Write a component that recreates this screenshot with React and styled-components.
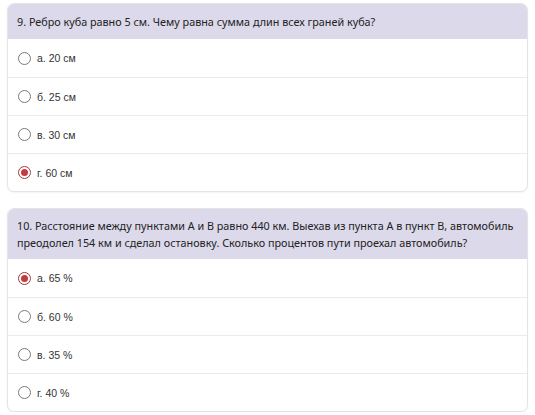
import React from 'react';
import styled, { createGlobalStyle } from 'styled-components';

const Global = createGlobalStyle`
  html, body { margin: 0; padding: 0; background: #fff; }
  body { font-family: "Noto Sans", sans-serif; }
`;

const Page = styled.div`
  padding: 3px 7px 0 7px;
  display: flex;
  flex-direction: column;
  gap: 16px;
`;

const Card = styled.div`
  border: 1px solid #e4e4e4;
  border-radius: 7px;
  overflow: hidden;
  background: #fff;
  box-shadow: 0 1px 2px rgba(0, 0, 0, 0.05);
`;

const Header = styled.div`
  background: #dcd9eb;
  padding: ${(p) => (p.multi ? '8px 9px 8px' : '9px 9px 9px')};
  font-size: 10.8px;
  line-height: 17px;
  color: #222;
`;

const Option = styled.label`
  display: flex;
  align-items: center;
  gap: 6px;
  height: 38px;
  box-sizing: border-box;
  padding: 0 10px;
  border-top: ${(p) => (p.first ? 'none' : '1px solid #ebebeb')};
  font-family: "Liberation Sans", Arial, sans-serif;
  font-size: 10.5px;
  color: #333;
`;

const Radio = styled.span`
  width: 13px;
  height: 13px;
  box-sizing: border-box;
  border-radius: 50%;
  border: 1px solid ${(p) => (p.checked ? '#9e3a3a' : '#7a7a7a')};
  display: flex;
  align-items: center;
  justify-content: center;
  background: #fff;
  &::after {
    content: "";
    display: ${(p) => (p.checked ? 'block' : 'none')};
    width: 7px;
    height: 7px;
    border-radius: 50%;
    background: #c43a3f;
  }
`;

const questions = [
  {
    text: '9. Ребро куба равно 5 см. Чему равна сумма длин всех граней куба?',
    options: ['а. 20 см', 'б. 25 см', 'в. 30 см', 'г. 60 см'],
    checked: 3,
  },
  {
    text: '10. Расстояние между пунктами А и В равно 440 км. Выехав из пункта А в пункт В, автомобиль преодолел 154 км и сделал остановку. Сколько процентов пути проехал автомобиль?',
    options: ['а. 65 %', 'б. 60 %', 'в. 35 %', 'г. 40 %'],
    checked: 0,
    multi: true,
  },
];

export default function App() {
  return (
    <>
      <Global />
      <Page>
        {questions.map((q, i) => (
          <Card key={i}>
            <Header multi={q.multi}>{q.text}</Header>
            {q.options.map((o, j) => (
              <Option key={j} first={j === 0}>
                <Radio checked={q.checked === j} />
                {o}
              </Option>
            ))}
          </Card>
        ))}
      </Page>
    </>
  );
}
